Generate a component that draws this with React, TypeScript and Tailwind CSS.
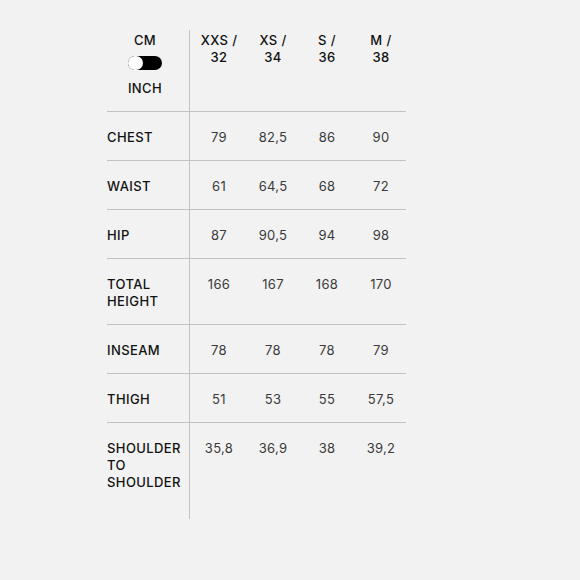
import React from "react";

type Row = {
  label: string[];
  values: string[];
};

const sizes = [
  ["XXS /", "32"],
  ["XS /", "34"],
  ["S /", "36"],
  ["M /", "38"],
];

const rows: Row[] = [
  { label: ["CHEST"], values: ["79", "82,5", "86", "90"] },
  { label: ["WAIST"], values: ["61", "64,5", "68", "72"] },
  { label: ["HIP"], values: ["87", "90,5", "94", "98"] },
  { label: ["TOTAL", "HEIGHT"], values: ["166", "167", "168", "170"] },
  { label: ["INSEAM"], values: ["78", "78", "78", "79"] },
  { label: ["THIGH"], values: ["51", "53", "55", "57,5"] },
  { label: ["SHOULDER", "TO", "SHOULDER"], values: ["35,8", "36,9", "38", "39,2"] },
];

function UnitToggle() {
  return (
    <div className="relative h-[14px] w-[34px] rounded-full bg-black">
      <span className="absolute left-0 top-0 h-[14px] w-[15px] rounded-full bg-white" />
    </div>
  );
}

export default function App() {
  return (
    <div
      className="min-h-[580px] w-[580px] bg-[#f2f2f2] pl-[107px] pt-[30px] text-[13px] leading-[17px] text-[#111]"
      style={{ fontFamily: "Inter, 'Liberation Sans', sans-serif" }}
    >
      <div className="w-[299px]">
        {/* header */}
        <div className="grid grid-cols-[83px_repeat(4,54px)] border-b border-[#c2c2c2]">
          <div className="flex flex-col items-center border-r border-[#c2c2c2] pb-[14px] pr-[6px] pt-[2px] font-medium tracking-[0.4px]">
            <span>CM</span>
            <div className="mt-[7px]">
              <UnitToggle />
            </div>
            <span className="mt-[10px]">INCH</span>
          </div>
          {sizes.map(([a, b]) => (
            <div key={a} className="flex flex-col items-center pl-[4px] pt-[2px] font-medium tracking-[0.4px]">
              <span>{a}</span>
              <span>{b}</span>
            </div>
          ))}
        </div>

        {rows.map((row, i) => {
          const last = i === rows.length - 1;
          return (
            <div
              key={row.label.join(" ")}
              className={
                last
                  ? "grid grid-cols-[83px_repeat(4,54px)]"
                  : "grid grid-cols-[83px_repeat(4,54px)] border-b border-[#c2c2c2]"
              }
            >
              <div
                className={
                  last
                    ? "flex flex-col border-r border-[#c2c2c2] pb-[28px] pt-[17px] font-medium tracking-[0.4px]"
                    : "flex flex-col border-r border-[#c2c2c2] pb-[14px] pt-[17px] font-medium tracking-[0.4px]"
                }
              >
                {row.label.map((l, j) => (
                  <span key={j}>{l}</span>
                ))}
              </div>
              {row.values.map((v, j) => (
                <div key={j} className="pl-[4px] pt-[17px] text-center tracking-[0.3px] text-[#3a3a3a]">
                  {v}
                </div>
              ))}
            </div>
          );
        })}
      </div>
    </div>
  );
}
